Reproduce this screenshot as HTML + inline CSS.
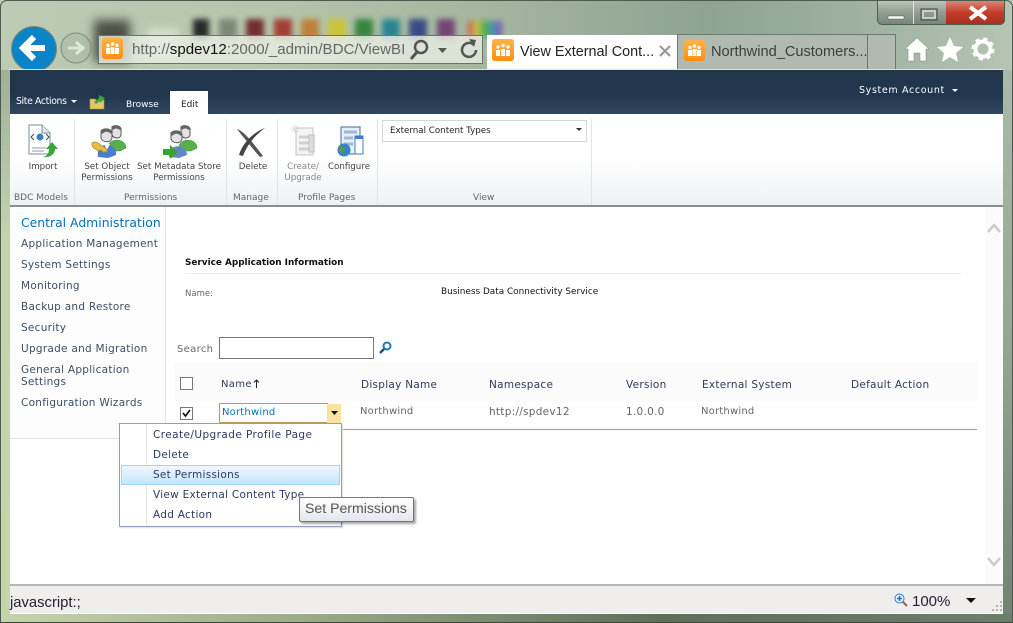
<!DOCTYPE html>
<html><head><meta charset="utf-8"><style>
html,body{margin:0;padding:0;background:#fff}
#p{position:relative;width:1013px;height:623px;overflow:hidden;background:#aebfa6;font-family:"DejaVu Sans",sans-serif}
#p div,#p span.t{position:absolute}
.t{white-space:nowrap;position:absolute}
.v{font-family:"DejaVu Sans",sans-serif;font-size:10.500px;letter-spacing:.27px;line-height:14px;color:#3b4f65}
.s{font-family:"Liberation Sans",sans-serif}
.r{font-size:8.700px;color:#444;text-align:center;line-height:11px}
.g{font-size:9px;color:#666;line-height:12px}
.h{color:#2a3c5c}
.c{color:#666}
.m{color:#2b3a63}
.n{font-size:10px;letter-spacing:.2px}
svg{position:absolute;overflow:visible}
</style></head><body><div id="p">
<div style="left:0;top:0;width:1013px;height:70px;background:linear-gradient(90deg,#bccbb4 0,#b6c6ac 25%,#a2b49e 50%,#8ea391 70%,#a3b5a5 88%,#b5c5b2 100%)"></div>
<div style="left:0;top:70px;width:10px;height:553px;background:linear-gradient(180deg,#9fb09a,#c4d2ae 30%,#c6d4ac)"></div>
<div style="left:1003px;top:70px;width:10px;height:553px;background:linear-gradient(180deg,#a9baa8,#94a692 50%,#6f8270)"></div>
<div style="left:0;top:614px;width:1013px;height:9px;background:linear-gradient(90deg,#c6d4ac,#9aab88 30%,#5d7058 65%,#6b7e6a)"></div>
<div style="left:0;top:0;width:1011px;height:621px;border:1px solid #4d5a50;border-bottom-color:#3b473c;border-radius:7px 7px 0 0"></div>
<!-- blurred swatches -->
<div style="left:94px;top:20px;width:36px;height:42px;background:#3a3a34;filter:blur(5px);opacity:.85"></div>
<div style="left:148px;top:28px;width:30px;height:32px;background:#dfe8d8;filter:blur(4px);opacity:.7"></div>
<div style="left:193px;top:19px;width:16px;height:20px;background:#1a1a1a;filter:blur(3px);opacity:.9"></div>
<div style="left:219px;top:19px;width:18px;height:20px;background:#6f7a6a;filter:blur(3px);opacity:.8"></div>
<div style="left:246px;top:19px;width:18px;height:20px;background:#6d1e24;filter:blur(3px);opacity:.9"></div>
<div style="left:274px;top:19px;width:18px;height:20px;background:#a13028;filter:blur(3px);opacity:.9"></div>
<div style="left:301px;top:19px;width:18px;height:20px;background:#c07a30;filter:blur(3px);opacity:.9"></div>
<div style="left:328px;top:19px;width:18px;height:20px;background:#cfc52a;filter:blur(3px);opacity:.9"></div>
<div style="left:355px;top:19px;width:18px;height:20px;background:#2c8035;filter:blur(3px);opacity:.9"></div>
<div style="left:382px;top:19px;width:18px;height:20px;background:#1e7f8e;filter:blur(3px);opacity:.9"></div>
<div style="left:409px;top:19px;width:18px;height:20px;background:#2c3f82;filter:blur(3px);opacity:.9"></div>
<div style="left:437px;top:19px;width:18px;height:20px;background:#6d3a72;filter:blur(3px);opacity:.9"></div>
<div style="left:468px;top:21px;width:34px;height:16px;background:linear-gradient(90deg,#c33,#dc3,#3a3,#38c,#83a);filter:blur(3px);opacity:.8"></div>
<!-- back/forward -->
<div style="left:11px;top:26px;width:44px;height:44px;border-radius:50%;background:#0a84c6;border:1px solid #7a8a78"></div>
<svg style="left:0;top:0" width="120" height="70"><path d="M22 48H45M34 37L23 48L34 59" fill="none" stroke="#fff" stroke-width="6"/><circle cx="76" cy="48" r="15" fill="#a8b8a2" fill-opacity=".5" stroke="#7c8b7a"/><path d="M68 48H82M76 42L83 48L76 54" fill="none" stroke="#dfe6da" stroke-width="3"/></svg>
<!-- address -->
<div style="left:98px;top:35px;width:383px;height:27px;background:rgba(232,238,226,.8);border:1px solid #68766a"></div>
<div style="left:102px;top:38px;width:21px;height:21px;border-radius:3px;background:linear-gradient(#ffb347,#ff8e12)"></div>
<svg style="left:102px;top:38px" width="21" height="21"><path d="M4 10h4v6H4zM8.500 9h4v7h-4zM13 10h4v6h-4z" fill="#fff"/><circle cx="6" cy="7.500" r="1.700" fill="#fff"/><circle cx="10.500" cy="6" r="1.700" fill="#fff"/><circle cx="15" cy="7.500" r="1.700" fill="#fff"/></svg>
<span class="t s" style="left:132px;top:40px;font-size:15.100px;line-height:20px;color:#666;width:272px;overflow:hidden">http://<span style="color:#111">spdev12</span>:2000/_admin/BDC/ViewBI</span>
<svg style="left:405px;top:36px" width="76" height="26"><circle cx="16" cy="11" r="6" fill="none" stroke="#555" stroke-width="2.500"/><path d="M12 16L6 23" stroke="#555" stroke-width="3"/><path d="M33 12h9l-4.500 5z" fill="#555"/><path d="M69 9a7 7 0 1 0 2 5" fill="none" stroke="#555" stroke-width="2.500"/><path d="M64 3l7 1-2 7z" fill="#555"/></svg>
<!-- tabs -->
<div style="left:487px;top:35px;width:190px;height:35px;background:#fff"></div>
<div style="left:492px;top:39px;width:22px;height:22px;border-radius:3px;background:linear-gradient(#ffb347,#ff8e12)"></div>
<svg style="left:492px;top:39px" width="22" height="22"><path d="M4 11h4v6H4zM9 10h4v7H9zM14 11h4v6h-4z" fill="#fff"/><circle cx="6" cy="8" r="1.700" fill="#fff"/><circle cx="11" cy="6.500" r="1.700" fill="#fff"/><circle cx="16" cy="8" r="1.700" fill="#fff"/></svg>
<span class="t s" style="left:520px;top:42px;font-size:14.400px;line-height:20px;color:#222">View External Cont...</span>
<svg style="left:660px;top:46px" width="10" height="10"><path d="M0 0L10 10M10 0L0 10" stroke="#999" stroke-width="2.200"/></svg>
<div style="left:677px;top:34px;width:217px;height:35px;background:#b1bab0;border:1px solid #6b786d;border-bottom:0"></div>
<div style="left:867px;top:35px;width:1px;height:34px;background:#6b786d"></div>
<div style="left:684px;top:40px;width:21px;height:21px;border-radius:3px;background:linear-gradient(#ffb347,#ff8e12)"></div>
<svg style="left:684px;top:40px" width="21" height="21"><path d="M4 10h4v6H4zM8.500 9h4v7h-4zM13 10h4v6h-4z" fill="#fff"/><circle cx="6" cy="7.500" r="1.700" fill="#fff"/><circle cx="10.500" cy="6" r="1.700" fill="#fff"/><circle cx="15" cy="7.500" r="1.700" fill="#fff"/></svg>
<span class="t s" style="left:711px;top:42px;font-size:14.600px;line-height:20px;color:#3a3f3a">Northwind_Customers...</span>
<!-- toolbar icons -->
<svg style="left:900px;top:32px" width="100" height="32"><path d="M5 17L17 6L29 17H26V29H20V21H14V29H8V17Z" fill="#fff" stroke="#7a8a78" stroke-width=".5"/><path d="M50 5L54 14L63 15L56 21L58 30L50 25L42 30L44 21L37 15L46 14Z" fill="#fff"/><circle cx="83" cy="17" r="7.500" fill="none" stroke="#fff" stroke-width="4"/><circle cx="83" cy="17" r="10" fill="none" stroke="#fff" stroke-width="3" stroke-dasharray="4 3.860"/></svg>
<!-- window buttons -->
<div style="left:877px;top:1px;width:126px;height:23px;border:1px solid #4f5c50;border-top:0;border-radius:0 0 5px 5px;overflow:hidden;background:linear-gradient(#b9c5b6,#8f9e8e 50%,#76877a)">
<div style="left:35px;top:0;width:1px;height:23px;background:#dfe5dc"></div>
<div style="left:68px;top:0;width:58px;height:23px;background:linear-gradient(#d8867a,#c43d28 50%,#a82f1e)"></div>
</div>
<svg style="left:877px;top:1px" width="126" height="24"><path d="M11 15H27V18H11Z" fill="#fff" stroke="#555" stroke-width=".5"/><rect x="44" y="8" width="16" height="11" fill="none" stroke="#444" stroke-width="1"/><rect x="46" y="10" width="12" height="7" fill="none" stroke="#ddd" stroke-width="1.500"/><path d="M93 6L109 18M109 6L93 18" stroke="#fff" stroke-width="4"/></svg>
<!-- page -->
<div style="left:10px;top:70px;width:993px;height:515px;background:#fff;border:0"></div>
<div style="left:9px;top:69px;width:994px;height:1px;background:#dfe5dc"></div>
<div style="left:10px;top:70px;width:993px;height:44px;background:linear-gradient(#21364d 0,#21364d 55%,#32465f 100%)"></div>
<span class="t v" style="left:16px;top:95px;font-size:9.300px;color:#fff;letter-spacing:-.35px">Site Actions</span>
<svg style="left:71px;top:100px" width="6" height="4"><path d="M0 0h6l-3 3z" fill="#fff"/></svg>
<svg style="left:89px;top:94px" width="18" height="16"><path d="M1 5h5l1 1h8v9H1z" fill="#e5c568" stroke="#b08c30" stroke-width=".6"/><path d="M5 8L10 4V1L16 4L11 9V7L7 10Z" fill="#3ca33a"/></svg>
<span class="t v" style="left:126px;top:98px;font-size:9px;letter-spacing:0;color:#fff">Browse</span>
<div style="left:170px;top:91px;width:38px;height:23px;background:#fff"></div>
<span class="t v" style="left:181px;top:98px;font-size:9px;letter-spacing:0;color:#222">Edit</span>
<span class="t v" style="left:859px;top:84px;font-size:9.500px;color:#fff;letter-spacing:.65px">System Account</span>
<svg style="left:952px;top:89px" width="6" height="4"><path d="M0 0h6l-3 3z" fill="#fff"/></svg>
<!-- ribbon -->
<div style="left:10px;top:114px;width:993px;height:91px;background:linear-gradient(#fff 0,#fff 50%,#eef0f2 100%);border-bottom:2px solid #8d8d8d"></div>
<div style="left:74px;top:119px;width:1px;height:86px;background:#e1e3e5"></div>
<div style="left:226px;top:119px;width:1px;height:86px;background:#e1e3e5"></div>
<div style="left:277px;top:119px;width:1px;height:86px;background:#e1e3e5"></div>
<div style="left:377px;top:119px;width:1px;height:86px;background:#e1e3e5"></div>
<div style="left:591px;top:119px;width:1px;height:86px;background:#e1e3e5"></div>
<!-- ribbon icons -->
<svg style="left:28px;top:124px" width="32" height="34"><path d="M1 1H14L22 9V30H1Z" fill="#fff" stroke="#7d8a9c"/><path d="M14 1V9H22" fill="#e5e9ee" stroke="#7d8a9c"/><path d="M4 24H18M4 27H16" stroke="#8d99a8"/><circle cx="12" cy="13" r="3.500" fill="#3a7fc0"/><path d="M6 10L3 13L6 16M18 10L21 13L18 16" fill="none" stroke="#444"/><path d="M14 33C18 33 21 30 21 25H18L24 18L30 25H27C27 31 21 34 14 33Z" fill="#3aa53a"/></svg>
<svg style="left:90px;top:124px" width="36" height="34"><path d="M18 24C17 14 36 13 36 24L30 27H22Z" fill="#57b04a" stroke="#3d8a33" stroke-width=".5"/><path d="M22 3C24 1 30 1 31 5V11C30 15 24 15 22 11Z" fill="#e2e2e2" stroke="#555"/><path d="M22 3C24 1 30 1 31 5L30 6C27 4 25 4 23 6Z" fill="#666"/><path d="M8 33C5 17 28 17 26 31L18 34Z" fill="#4a7cd0"/><path d="M14 20L17 26L20 20Z" fill="#fff"/><path d="M11 7C13 4 20 4 22 8V14C21 19 13 19 11 14Z" fill="#e2e2e2" stroke="#555"/><path d="M11 7C13 4 20 4 22 8L21 10C18 7 15 7 12 10Z" fill="#666"/><path d="M2 21C1 18 5 17 8 19L17 25L17 28L13 28L11 26L8 27L6 25C4 25 3 24 2 21Z" fill="#e3bf45" stroke="#a5851f" stroke-width=".7"/></svg>
<svg style="left:163px;top:124px" width="36" height="34"><path d="M16 24C15 14 34 13 34 24L28 27H20Z" fill="#57b04a" stroke="#3d8a33" stroke-width=".5"/><path d="M18 3C20 1 26 1 27 5V11C26 15 20 15 18 11Z" fill="#e2e2e2" stroke="#555"/><path d="M18 3C20 1 26 1 27 5L26 6C23 4 21 4 19 6Z" fill="#666"/><path d="M6 33C4 19 24 19 24 31L16 34Z" fill="#6487c8"/><path d="M8 9C10 6 17 6 19 10V15C18 20 10 20 8 15Z" fill="#e2e2e2" stroke="#555"/><path d="M8 9C10 6 17 6 19 10L18 12C15 9 12 9 9 12Z" fill="#666"/><path d="M0 25H7V21L15 28L7 35V31H0Z" fill="#38a238"/></svg>
<svg style="left:236px;top:127px" width="32" height="30"><path d="M1 2C8 4 18 17 27 29L24 30C16 21 8 11 1 2Z" fill="#555"/><path d="M29 1C20 4 7 14 3 28L7 29C11 18 19 8 29 1Z" fill="#444"/></svg>
<svg style="left:289px;top:125px" width="30" height="32"><path d="M7 3H24V30H7Z" fill="#f3f3f3" stroke="#c5c5c5"/><path d="M10 12H21M10 18H21M10 24H21" stroke="#cfcfcf" stroke-width="3"/><path d="M6 0V8M2 4H10M3 1L9 7M9 1L3 7" stroke="#ddd"/><path d="M20 10H25V27H20Z" fill="#ddd" stroke="#bbb"/></svg>
<svg style="left:335px;top:126px" width="30" height="32"><path d="M6 1H25V28H6Z" fill="#e8eef6" stroke="#456a9c"/><path d="M9 6H22M9 12H18M9 18H18" stroke="#9fb6d4" stroke-width="3"/><path d="M20 10H28V28H20Z" fill="#fff" stroke="#3e7ec9"/><path d="M20 10H28V13H20Z" fill="#3e7ec9"/><circle cx="9" cy="24" r="6.500" fill="#3a82c4"/><path d="M5 20L10 22L8 27L4 26Z" fill="#4ea43f"/></svg>
<span class="t r" style="left:13px;top:162px;width:60px">Import</span>
<span class="t r" style="left:77px;top:162px;width:60px">Set Object</span>
<span class="t r" style="left:77px;top:173px;width:60px">Permissions</span>
<span class="t r" style="left:134px;top:162px;width:90px">Set Metadata Store</span>
<span class="t r" style="left:134px;top:173px;width:90px">Permissions</span>
<span class="t r" style="left:228px;top:162px;width:50px">Delete</span>
<span class="t r" style="left:278px;top:162px;width:50px;color:#888">Create/</span>
<span class="t r" style="left:278px;top:173px;width:50px;color:#888">Upgrade</span>
<span class="t r" style="left:324px;top:162px;width:50px">Configure</span>
<span class="t g" style="left:14px;top:192px">BDC Models</span>
<span class="t g" style="left:124px;top:192px">Permissions</span>
<span class="t g" style="left:233px;top:192px">Manage</span>
<span class="t g" style="left:298px;top:192px">Profile Pages</span>
<span class="t g" style="left:473px;top:192px">View</span>
<div style="left:382px;top:120px;width:203px;height:20px;background:#fff;border:1px solid #d4d6d8"></div>
<span class="t" style="left:390px;top:125px;font-size:8.700px;line-height:12px;color:#222">External Content Types</span>
<svg style="left:576px;top:128px" width="6" height="4"><path d="M0 0h6l-3 3z" fill="#333"/></svg>
<!-- left nav -->
<div style="left:10px;top:207px;width:155px;height:231px;background:#fdfdfe;border-right:1px solid #e4e4e4"></div>
<div style="left:10px;top:438px;width:110px;height:1px;background:#e4e4e4"></div>
<span class="t" style="left:21px;top:214px;font-size:12.400px;line-height:17px;color:#0072bc">Central Administration</span>
<span class="t v" style="left:21px;top:237px">Application Management</span>
<span class="t v" style="left:21px;top:258px">System Settings</span>
<span class="t v" style="left:21px;top:279px">Monitoring</span>
<span class="t v" style="left:21px;top:300px">Backup and Restore</span>
<span class="t v" style="left:21px;top:321px">Security</span>
<span class="t v" style="left:21px;top:342px">Upgrade and Migration</span>
<span class="t v" style="left:21px;top:363px">General Application</span>
<span class="t v" style="left:21px;top:375px">Settings</span>
<span class="t v" style="left:21px;top:396px">Configuration Wizards</span>
<!-- main -->
<span class="t" style="left:185px;top:257px;font-size:8.900px;line-height:13px;font-weight:bold;color:#111">Service Application Information</span>
<div style="left:185px;top:273px;width:776px;height:1px;background:#ececec"></div>
<span class="t" style="left:185px;top:288px;font-size:8.500px;line-height:12px;color:#666">Name:</span>
<span class="t" style="left:441px;top:286px;font-size:8.900px;line-height:13px;color:#111">Business Data Connectivity Service</span>
<span class="t v c" style="left:177px;top:343px;font-size:10px;letter-spacing:.33px">Search</span>
<div style="left:219px;top:337px;width:153px;height:20px;background:#fff;border:1px solid #777"></div>
<svg style="left:379px;top:341px" width="13" height="14"><circle cx="8" cy="5" r="3.500" fill="#fff" stroke="#1f78b8" stroke-width="2"/><path d="M5 8L1 12" stroke="#1d4f86" stroke-width="2.500"/></svg>
<div style="left:174px;top:362px;width:803px;height:39px;background:#fbfbfb"></div>
<div style="left:180px;top:377px;width:11px;height:11px;background:#fff;border:1px solid #777"></div>
<span class="t v h" style="left:221px;top:378px;font-size:10px;letter-spacing:.33px">Name</span>
<svg style="left:253px;top:379px" width="7" height="10"><path d="M3.500 9V1M1 3.500L3.500 1L6 3.500" fill="none" stroke="#222" stroke-width="1"/></svg>
<span class="t v h" style="left:361px;top:378px">Display Name</span>
<span class="t v h" style="left:489px;top:378px">Namespace</span>
<span class="t v h" style="left:626px;top:378px">Version</span>
<span class="t v h" style="left:702px;top:378px">External System</span>
<span class="t v h" style="left:851px;top:378px">Default Action</span>
<div style="left:180px;top:407px;width:11px;height:11px;background:#fff;border:1px solid #777"></div>
<svg style="left:181px;top:408px" width="11" height="11"><path d="M2 5L4.500 8L9 2" fill="none" stroke="#111" stroke-width="1.700"/></svg>
<div style="left:219px;top:403px;width:107px;height:18px;background:#fff;border:1px solid #b59a60"></div>
<div style="left:327px;top:404px;width:14px;height:19px;background:#fde29f"></div>
<svg style="left:331px;top:411px" width="7" height="4"><path d="M0 0h7l-3.500 4z" fill="#111"/></svg>
<span class="t v n" style="left:222px;top:406px;color:#0072bc">Northwind</span>
<span class="t v c n" style="left:360px;top:405px">Northwind</span>
<span class="t v c" style="left:489px;top:405px">http://spdev12</span>
<span class="t v c" style="left:626px;top:405px">1.0.0.0</span>
<span class="t v c n" style="left:701px;top:405px">Northwind</span>
<div style="left:340px;top:429px;width:637px;height:1px;background:#8a9fb8"></div>
<!-- scrollbar -->
<div style="left:985px;top:207px;width:18px;height:378px;background:#fbfbfb"></div>
<svg style="left:987px;top:222px" width="14" height="340"><path d="M1 10L7 3L13 10" fill="none" stroke="#ccc" stroke-width="2.500"/><path d="M1 336L7 343L13 336" fill="none" stroke="#ccc" stroke-width="2.500"/></svg>
<!-- menu -->
<div style="left:119px;top:423px;width:221px;height:102px;background:#fff;border:1px solid #8ea1b8;box-shadow:1px 1px 1px #ddd"></div>
<div style="left:146px;top:424px;width:1px;height:102px;background:#e4e4e4"></div>
<div style="left:121px;top:465px;width:217px;height:18px;background:linear-gradient(#eff8fe,#c4e5fb);border:1px solid #a5d4f0"></div>
<span class="t v m" style="left:153px;top:428px;letter-spacing:.42px">Create/Upgrade Profile Page</span>
<span class="t v m" style="left:153px;top:448px">Delete</span>
<span class="t v m" style="left:153px;top:468px">Set Permissions</span>
<span class="t v m" style="left:153px;top:488px;letter-spacing:.27px">View External Content Type</span>
<span class="t v m" style="left:153px;top:508px">Add Action</span>
<!-- tooltip -->
<div style="left:299px;top:497px;width:113px;height:23px;background:linear-gradient(#fff,#e5e5ef);border:1px solid #767676;border-radius:2px;box-shadow:2px 2px 2px rgba(0,0,0,.35)"></div>
<span class="t s" style="left:305px;top:499px;font-size:14.100px;line-height:18px;color:#555">Set Permissions</span>
<!-- status -->
<div style="left:10px;top:584px;width:993px;height:2px;background:#b5b5b5"></div>
<div style="left:10px;top:586px;width:993px;height:28px;background:#f0eded;border-bottom:1px solid #fff;box-sizing:border-box"></div>
<span class="t s" style="left:10px;top:594px;font-size:14.800px;line-height:18px;color:#223">javascript:;</span>
<svg style="left:894px;top:593px" width="14" height="14"><circle cx="5.500" cy="5.500" r="4.500" fill="#eaf3fb" stroke="#2b7cc6"/><path d="M3 5.500H8M5.500 3V8" stroke="#1c6fc0" stroke-width="1.500"/><path d="M9 9L13 13" stroke="#8c6a3c" stroke-width="2"/></svg>
<span class="t s" style="left:912px;top:593px;font-size:15px;line-height:18px;color:#223">100%</span>
<svg style="left:966px;top:598px" width="10" height="6"><path d="M0 0h10l-5 5z" fill="#111"/></svg>
<svg style="left:990px;top:600px" width="13" height="13"><path d="M10 1h2v2h-2zM6 5h2v2H6zM10 5h2v2h-2zM2 9h2v2H2zM6 9h2v2H6zM10 9h2v2h-2z" fill="#b5b5b5"/></svg>
</div></body></html>
